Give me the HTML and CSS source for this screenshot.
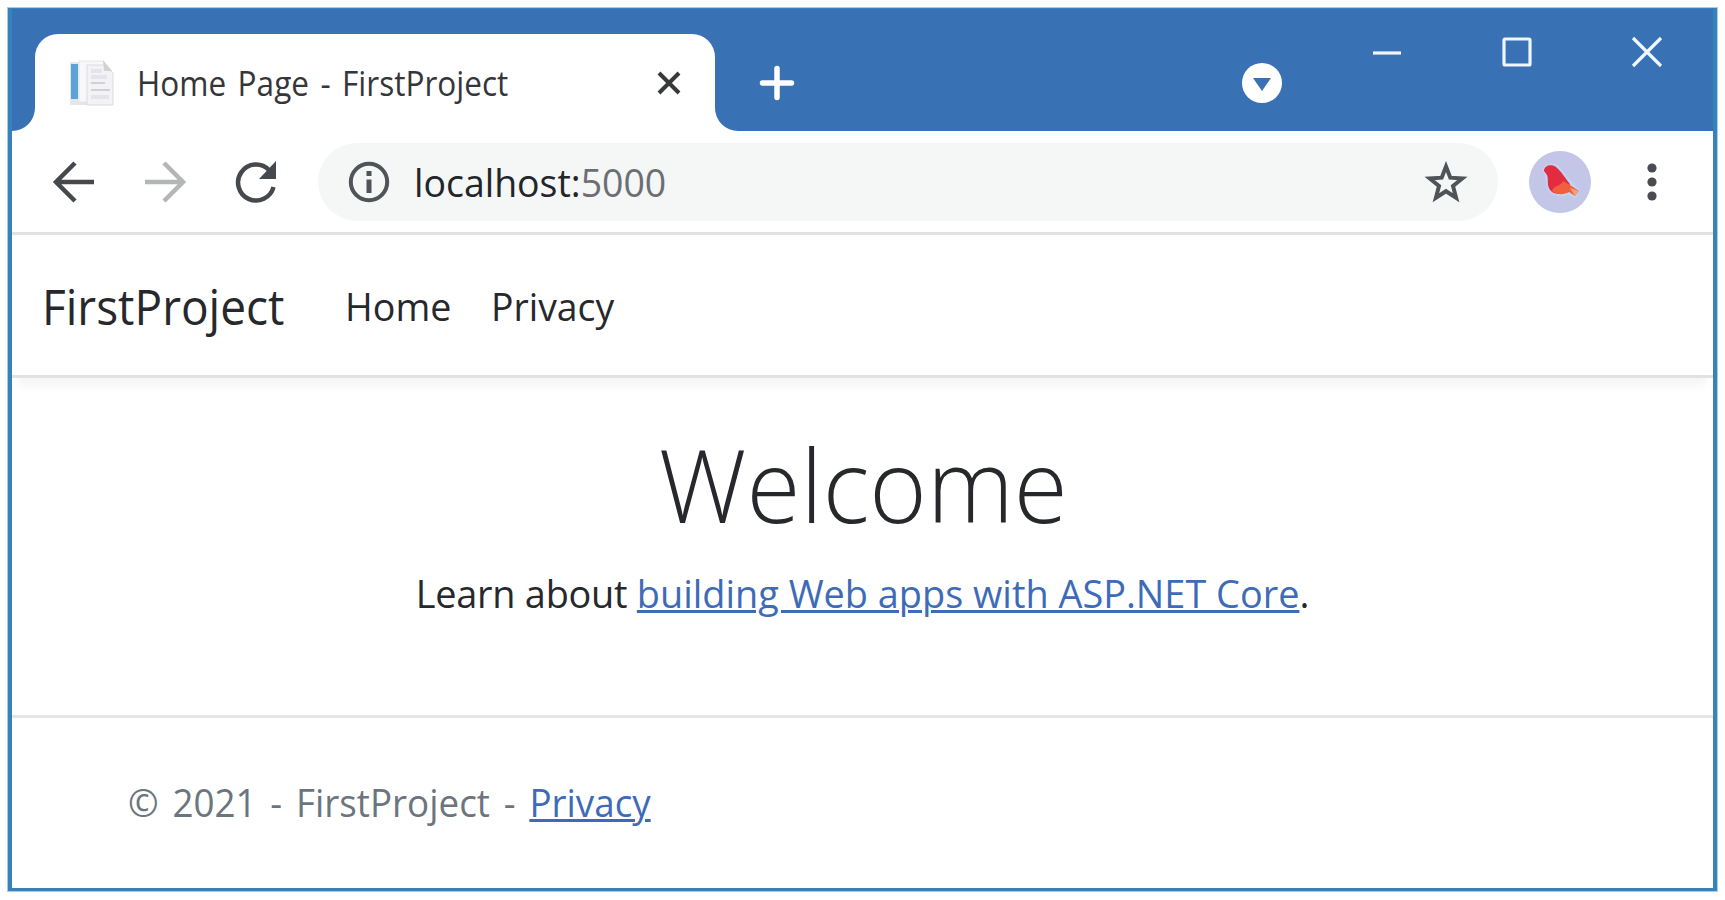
FILE: index.html
```html
<!DOCTYPE html>
<html lang="en">
<head>
<meta charset="utf-8">
<title>Home Page - FirstProject</title>
<link rel="stylesheet" href="styles.css">
</head>
<body>
<div class="window">
  <header class="titlebar">
    <div class="tab">
      <svg class="flare flare-left" viewBox="0 0 23 23"><path d="M23 0v23H0A23 23 0 0 0 23 0z"/></svg>
      <svg class="flare flare-right" viewBox="0 0 23 23"><path d="M0 0v23h23A23 23 0 0 1 0 0z"/></svg>
      <svg class="favicon" viewBox="0 0 46 48">
        <path d="M1 3h9v40H1z" fill="#e4e6ee"/><path d="M2 5h7v35H2z" fill="#5ba3d6"/>
        <path d="M1 43h20v3H1z" fill="#e4e6ee"/>
        <path d="M10 2h23l8 8v33H10z" fill="#f8f8fa" stroke="#e6e6ea"/>
        <path d="M18 6h18l8 8v32H18z" fill="#f3f3f5" stroke="#dcdcdf"/>
        <path d="M34 1l9 11h-8z" fill="#d2d2d4"/>
        <path d="M22 24h14M22 31h19" stroke="#d0d1d5" stroke-width="2"/>
        <path d="M22 12h11M22 18h16M22 38h18" stroke="#e3e4ec" stroke-width="4"/>
      </svg>
      <span class="text tab-title">Home Page - FirstProject</span>
      <svg class="tab-close" viewBox="0 0 24 24"><path d="M2 2l20 20M22 2L2 22"/></svg>
    </div>
    <svg class="new-tab" viewBox="0 0 34 34"><path d="M17 2.500v29M2.500 17h29"/></svg>
    <svg class="tab-search" viewBox="0 0 40 40"><circle cx="20" cy="20" r="20" fill="#fff"/><path d="M11 15h18l-9 13z" fill="#3872b5"/></svg>
    <div class="controls">
      <svg viewBox="0 0 30 30"><path d="M1 16h28"/></svg>
      <svg viewBox="0 0 30 30"><rect x="2" y="2" width="26" height="26" rx="1"/></svg>
      <svg viewBox="0 0 30 30"><path d="M1 1l28 28M29 1L1 29"/></svg>
    </div>
  </header>
  <div class="toolbar">
    <svg class="nav-icon" viewBox="0 0 42 42"><path d="M41 21H4M22 2L3 21l19 19"/></svg>
    <svg class="nav-icon forward" viewBox="0 0 42 42"><path d="M1 21h37M20 2l19 19-19 19"/></svg>
    <svg class="nav-icon reload" viewBox="0 0 42 42"><path d="M38.500 26A18 18 0 1 1 34 9"/><path class="solid" d="M41 0v18H24z"/></svg>
    <div class="address">
      <svg class="info" viewBox="0 0 42 42"><circle cx="21" cy="21" r="18.2"/><path class="info-mark" d="M21 18.500v13.500M21 10v5"/></svg>
      <span class="text url">localhost:<span class="port">5000</span></span>
      <svg class="star" viewBox="0 0 44 42"><path d="M22 5.500l4.300 11.200 12 .8-9.300 7.500 3.100 11.700L22 30.200l-10.100 6.500 3.100-11.700-9.300-7.500 12-.8z"/></svg>
    </div>
    <svg class="avatar" viewBox="0 0 62 62">
      <circle cx="31" cy="31" r="31" fill="#c4c6e8"/>
      <path d="M16 20c0-5 7-7 12-4l13 16 8 8-3 5-7-4c-5 4-12 3-17-1-4-5-3-11-4-17z" fill="#c3d4f0" stroke="#c3d4f0" stroke-width="4" stroke-linejoin="round"/>
      <path d="M15 20c0-6 8-7 12-4 6 5 9 11 14 17-2 8-13 13-19 7-5-5-2-11-4-16z" fill="#e22c3f"/>
      <path d="M23 40c2-6 8-4 11-10l7 4 9 6-4 5-6-4c-5 3-12 3-17-1z" fill="#f0603f"/>
      <path d="M41 37l9 3-4 5z" fill="#f3a27a"/>
    </svg>
    <svg class="menu" viewBox="0 0 10 40"><circle cx="5" cy="6" r="4.600"/><circle cx="5" cy="20" r="4.600"/><circle cx="5" cy="34" r="4.600"/></svg>
  </div>
  <nav class="navbar">
    <a class="text brand">FirstProject</a>
    <a class="text nav-home">Home</a>
    <a class="text nav-privacy">Privacy</a>
  </nav>
  <main class="content">
    <h1 class="text welcome">Welcome</h1>
    <p class="text learn"><span class="lead">Learn about </span><a class="link">building Web apps with ASP.NET Core</a>.</p>
  </main>
  <footer class="footer"><span class="text copyright">© 2021 - FirstProject - <a class="link">Privacy</a></span></footer>
</div>
</body>
</html>
```
FILE: styles.css
```css
* { box-sizing: border-box; }
body { margin: 0; width: 1725px; height: 900px; padding: 7px 7px 8px; background: #fff; overflow: hidden; font-family: "Open Sans", "Noto Sans", sans-serif; color: #26282b; }
svg { display: block; flex: none; fill: none; overflow: visible; }
.window { width: 1711px; height: 885px; border: 5px solid #3682bd; outline: 1px solid #a9cde7; outline-offset: -1px; border-top-width: 2px; border-bottom-width: 4px; display: flex; flex-direction: column; background: #fff; }
.text { display: block; flex: none; white-space: nowrap; transform-origin: 0 50%; margin: 0; font-weight: 400; }
.titlebar { height: 122px; background: #3872b5; display: flex; padding: 25px 51px 0 23px; }
.tab { width: 680px; height: 97px; background: #fff; border-radius: 23px 23px 0 0; position: relative; display: flex; align-items: center; padding: 0 34px 0 34px; }
.flare { position: absolute; bottom: 0; width: 23px; height: 23px; fill: #fff; }
.flare-left { left: -23px; }
.flare-right { right: -23px; }
.favicon { width: 46px; height: 48px; margin-right: 22px; }
.tab-title { font-size: 34px; line-height: 46px; word-spacing: 3.5px; transform: scaleX(.928); color: #34363a; }
.tab-close { width: 24px; height: 24px; margin-left: auto; stroke: #38393b; stroke-width: 4; }
.new-tab { width: 34px; height: 34px; margin: 32px 0 0 45px; stroke: #fff; stroke-width: 5.5; stroke-linecap: round; }
.tab-search { width: 40px; height: 40px; margin: 29px 0 0 auto; }
.controls { display: flex; gap: 100px; margin: 3px 0 0 90px; }
.controls svg { width: 30px; height: 30px; stroke: #eff6fc; stroke-width: 3.2; }
.toolbar { height: 104px; border-bottom: 3px solid #e2e2e3; display: flex; align-items: center; padding: 0 56px 0 41px; }
.nav-icon { width: 42px; height: 42px; margin-right: 49px; stroke: #45484c; stroke-width: 4.5; }
.forward { stroke: #b4b5b7; }
.reload { margin-right: 41px; }
.solid { fill: #45484c; stroke: none; }
.address { width: 1180px; height: 78px; border-radius: 39px; background: #f5f6f6; display: flex; align-items: center; padding: 0 30px; }
.info { width: 42px; height: 42px; margin-right: 24px; stroke: #505357; stroke-width: 4; }
.info-mark { stroke-width: 5; }
.url { font-size: 38px; line-height: 52px; color: #222529; transform: scaleX(.985); }
.port { color: #6b6e73; }
.star { width: 44px; height: 42px; margin-left: auto; stroke: #505357; stroke-width: 4; }
.avatar { width: 62px; height: 62px; margin-left: 31px; }
.menu { width: 10px; height: 40px; margin-left: auto; fill: #494c50; }
.navbar { height: 143px; border-bottom: 3px solid #e2e2e3; box-shadow: 0 14px 10px -6px rgba(0,0,0,.045); display: flex; align-items: center; padding: 1px 30px 0; }
.brand { width: 303px; font-size: 50px; transform: scaleX(.92); }
.nav-home { width: 146px; font-size: 39px; transform: scaleX(.965); }
.nav-privacy { font-size: 39px; transform: scaleX(.957); }
.content { height: 337px; display: flex; flex-direction: column; align-items: center; padding-top: 36px; }
.welcome { font-size: 102px; font-weight: 300; line-height: 140px; transform-origin: center; transform: translateX(1px) scaleX(.963); }
.learn { margin-top: 13px; font-size: 38px; line-height: 52px; transform-origin: center; transform: scaleX(.996); }
.lead { letter-spacing: -.25px; }
.link { color: #3e6bb8; text-decoration: underline; text-decoration-thickness: 3px; }
.footer { flex: 1; border-top: 3px solid #e5e5ea; padding: 58px 0 0 116px; }
.copyright { font-size: 38px; line-height: 52px; color: #6c757d; word-spacing: 4.4px; transform: scaleX(.968); }
```
